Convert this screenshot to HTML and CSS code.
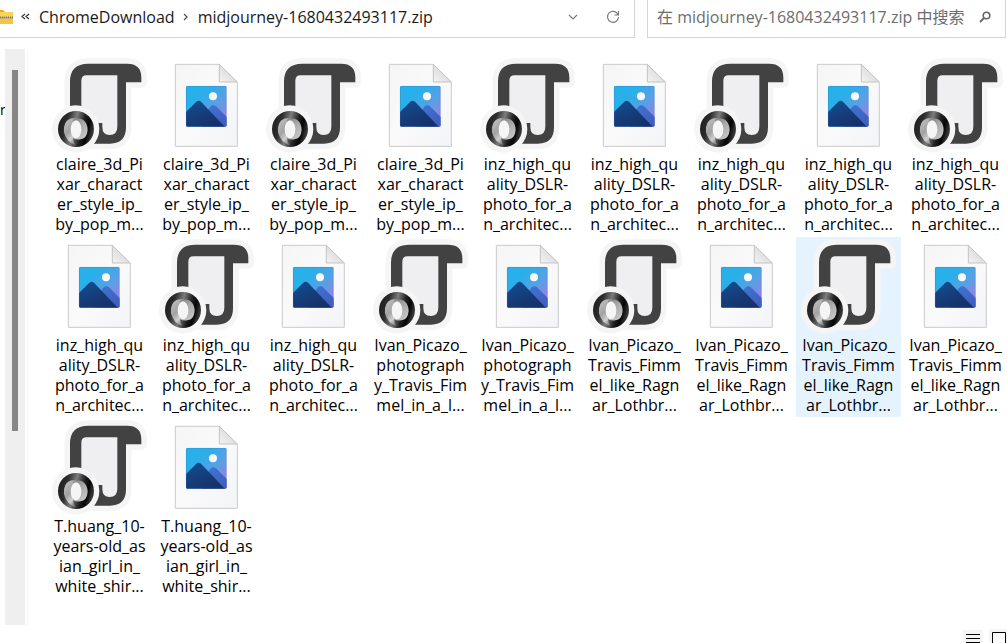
FILE: index.html
```html
<!DOCTYPE html>
<html lang="zh-CN">
<head>
<meta charset="utf-8">
<title>midjourney-1680432493117.zip</title>
<link rel="stylesheet" href="styles.css">
</head>
<body>
<svg class="defs" width="0" height="0" aria-hidden="true">
  <defs>
    <linearGradient id="ring" x1="0" y1="0.2" x2="1" y2="0.45"><stop offset="0" stop-color="#1c1c1c"/><stop offset="0.25" stop-color="#2c2c2c"/><stop offset="0.48" stop-color="#7c7c7c"/><stop offset="0.7" stop-color="#222"/><stop offset="0.85" stop-color="#060606"/><stop offset="1" stop-color="#3a3a3a"/></linearGradient>
    <linearGradient id="swirlA" x1="0" y1="0" x2="0.6" y2="1"><stop offset="0" stop-color="#c4c4c4"/><stop offset="0.5" stop-color="#a2a2a2"/><stop offset="0.75" stop-color="#d0d0d0"/><stop offset="1" stop-color="#777"/></linearGradient>
    <linearGradient id="swirlB" x1="0" y1="0" x2="0.6" y2="1"><stop offset="0" stop-color="#808080"/><stop offset="0.5" stop-color="#ababab"/><stop offset="1" stop-color="#c6c6c6"/></linearGradient>
    <linearGradient id="page" x1="0" y1="0" x2="1" y2="1"><stop offset="0" stop-color="#f5f5f6"/><stop offset="0.5" stop-color="#fafafb"/><stop offset="1" stop-color="#f3f4f7"/></linearGradient>
    <linearGradient id="fold" x1="0" y1="1" x2="0.6" y2="0.4"><stop offset="0" stop-color="#f4f4f4"/><stop offset="1" stop-color="#dcdcdc"/></linearGradient>
    <linearGradient id="sky" x1="0.35" y1="0.2" x2="1" y2="0.85"><stop offset="0" stop-color="#27b0ea"/><stop offset="0.5" stop-color="#5a9fe5"/><stop offset="1" stop-color="#a779dc"/></linearGradient>
    <linearGradient id="hill" x1="0" y1="0" x2="0.6" y2="1"><stop offset="0" stop-color="#124f92"/><stop offset="1" stop-color="#173068"/></linearGradient>
    <linearGradient id="hill2" x1="0" y1="0" x2="1" y2="1"><stop offset="0" stop-color="#3f78d4"/><stop offset="1" stop-color="#4059bd"/></linearGradient>
    <clipPath id="frame"><rect x="102" y="108" width="122" height="122" rx="4"/></clipPath>
    <symbol id="json" viewBox="6 18 315 291">
      <path d="M75 235V95Q75 41 130 41H246Q289 41 289 82V97H243V232Q243 281 195 281H110Z" fill="#f5f5f5" stroke="#f5f5f5" stroke-width="33" stroke-linejoin="round"/>
      <path d="M75 235V95Q75 41 130 41H246Q289 41 289 82V97H243V232Q243 281 195 281H110Z" fill="#424242"/>
      <path d="M109 235V92Q109 76 125 76H217V230Q217 255 194 255Q172 255 172 232V219H155Z" fill="#efeff1"/>
      <circle cx="92" cy="237" r="71" fill="#f5f5f5"/>
      <circle cx="93" cy="237" r="54" fill="url(#ring)"/>
      <path d="M106 211Q76 196 61 219Q48 246 70 272Q78 280 92 286Q84 276 84 264Z" fill="url(#swirlA)"/>
      <path d="M84 209Q100 202 114 209Q128 220 128 240Q126 266 106 268Q94 270 84 265Z" fill="url(#swirlB)"/>
      <ellipse cx="93" cy="238" rx="16" ry="27" fill="#f5f5f5"/>
    </symbol>
    <symbol id="image" viewBox="6 18 315 291">
      <path d="M70 43H202L256 97V289H70Z" fill="url(#page)" stroke="#cbcbcb" stroke-width="3"/>
      <path d="M202 43V96H256Z" fill="url(#fold)" stroke="#c3c3c3" stroke-width="3" stroke-linejoin="round"/>
      <g clip-path="url(#frame)">
        <path d="M102 108H224V230H102Z" fill="url(#sky)"/>
        <path d="M150 204L176 169Q184 162 192 169L226 203V232H150Z" fill="url(#hill2)"/>
        <path d="M100 188L133 155Q140 149 147 155L220 232H100Z" fill="url(#hill)"/>
        <circle cx="183" cy="139" r="12" fill="#f7f9fb"/>
      </g>
      <rect x="103" y="109" width="120" height="120" rx="4" fill="none" stroke="#3978bd" stroke-opacity="0.45" stroke-width="2"/>
    </symbol>
  </defs>
</svg>

<header class="toolbar">
  <nav class="address" aria-label="地址">
    <svg class="zip" width="14" height="16" viewBox="0 0 14 16" aria-hidden="true">
      <path d="M0 1H3L5 3H13V13H0Z" fill="#e8a82c"/>
      <path d="M0 3H13V8H0Z" fill="#fcd354"/>
      <path d="M0 10H13V15H0Z" fill="#f5c542"/>
      <path d="M0 8.5H13" stroke="#7b7461" stroke-width="2" stroke-dasharray="1 1"/>
      <path d="M0 10H13" stroke="#c9c5b5"/>
    </svg>
    <button class="more" type="button" aria-label="更多"><svg width="9" height="8" viewBox="0 0 9 8"><path d="M4 1L1 3.5L4 6M8 1L5 3.5L8 6" fill="none" stroke="#333" stroke-width="1.2"/></svg></button>
    <button class="crumb" type="button">ChromeDownload</button>
    <svg class="sep" width="6" height="8" viewBox="0 0 6 8" aria-hidden="true"><path d="M1 1L4 4L1 7" fill="none" stroke="#555" stroke-width="1.3"/></svg>
    <button class="crumb current" type="button">midjourney-1680432493117.zip</button>
    <button class="tool" type="button" aria-label="展开"><svg width="10" height="6" viewBox="0 0 10 6"><path d="M1 1L5 5L9 1" fill="none" stroke="#777" stroke-width="1.1"/></svg></button>
    <button class="tool" type="button" aria-label="刷新"><svg width="14" height="14" viewBox="0 0 14 14"><path d="M12 4.5A5.5 5.5 0 1 0 12.5 7M12.5 1V5H8.5" fill="none" stroke="#777" stroke-width="1.1"/></svg></button>
  </nav>
  <form class="search">
    <input type="search" aria-label="搜索" placeholder="在 midjourney-1680432493117.zip 中搜索">
    <button class="find" type="button" aria-label="搜索"><svg width="12" height="12" viewBox="0 0 12 12"><circle cx="7.5" cy="4.5" r="3.3" fill="none" stroke="#666" stroke-width="1.6"/><path d="M5 7L1 11" stroke="#666" stroke-width="1.8"/></svg></button>
  </form>
</header>

<main class="workspace">
  <aside class="tree"><span class="label">r</span><div class="track"><div class="thumb"></div></div></aside>
  <section class="files">
    <button class="tile" type="button"><svg><use href="#json"/></svg><span>claire_3d_Pi<br>xar_charact<br>er_style_ip_<br>by_pop_m...</span></button>
    <button class="tile" type="button"><svg><use href="#image"/></svg><span>claire_3d_Pi<br>xar_charact<br>er_style_ip_<br>by_pop_m...</span></button>
    <button class="tile" type="button"><svg><use href="#json"/></svg><span>claire_3d_Pi<br>xar_charact<br>er_style_ip_<br>by_pop_m...</span></button>
    <button class="tile" type="button"><svg><use href="#image"/></svg><span>claire_3d_Pi<br>xar_charact<br>er_style_ip_<br>by_pop_m...</span></button>
    <button class="tile" type="button"><svg><use href="#json"/></svg><span>inz_high_qu<br>ality_DSLR-<br>photo_for_a<br>n_architec...</span></button>
    <button class="tile" type="button"><svg><use href="#image"/></svg><span>inz_high_qu<br>ality_DSLR-<br>photo_for_a<br>n_architec...</span></button>
    <button class="tile" type="button"><svg><use href="#json"/></svg><span>inz_high_qu<br>ality_DSLR-<br>photo_for_a<br>n_architec...</span></button>
    <button class="tile" type="button"><svg><use href="#image"/></svg><span>inz_high_qu<br>ality_DSLR-<br>photo_for_a<br>n_architec...</span></button>
    <button class="tile" type="button"><svg><use href="#json"/></svg><span>inz_high_qu<br>ality_DSLR-<br>photo_for_a<br>n_architec...</span></button>
    <button class="tile" type="button"><svg><use href="#image"/></svg><span>inz_high_qu<br>ality_DSLR-<br>photo_for_a<br>n_architec...</span></button>
    <button class="tile" type="button"><svg><use href="#json"/></svg><span>inz_high_qu<br>ality_DSLR-<br>photo_for_a<br>n_architec...</span></button>
    <button class="tile" type="button"><svg><use href="#image"/></svg><span>inz_high_qu<br>ality_DSLR-<br>photo_for_a<br>n_architec...</span></button>
    <button class="tile" type="button"><svg><use href="#json"/></svg><span>Ivan_Picazo_<br>photograph<br>y_Travis_Fim<br>mel_in_a_l...</span></button>
    <button class="tile" type="button"><svg><use href="#image"/></svg><span>Ivan_Picazo_<br>photograph<br>y_Travis_Fim<br>mel_in_a_l...</span></button>
    <button class="tile" type="button"><svg><use href="#json"/></svg><span>Ivan_Picazo_<br>Travis_Fimm<br>el_like_Ragn<br>ar_Lothbr...</span></button>
    <button class="tile" type="button"><svg><use href="#image"/></svg><span>Ivan_Picazo_<br>Travis_Fimm<br>el_like_Ragn<br>ar_Lothbr...</span></button>
    <button class="tile hovered" type="button"><svg><use href="#json"/></svg><span>Ivan_Picazo_<br>Travis_Fimm<br>el_like_Ragn<br>ar_Lothbr...</span></button>
    <button class="tile" type="button"><svg><use href="#image"/></svg><span>Ivan_Picazo_<br>Travis_Fimm<br>el_like_Ragn<br>ar_Lothbr...</span></button>
    <button class="tile" type="button"><svg><use href="#json"/></svg><span>T.huang_10-<br>years-old_as<br>ian_girl_in_<br>white_shir...</span></button>
    <button class="tile" type="button"><svg><use href="#image"/></svg><span>T.huang_10-<br>years-old_as<br>ian_girl_in_<br>white_shir...</span></button>
  </section>
</main>

<footer class="status">
  <button class="view" type="button" aria-label="详细信息"><svg width="20" height="13" viewBox="0 0 20 13"><path d="M3 4.5H17M3 8.5H17M3 12.5H17" stroke="#000"/></svg></button>
  <button class="view large" type="button" aria-label="大图标"><svg width="18" height="14" viewBox="0 0 18 14"><path d="M3.500 16V3.500H16.500V16" fill="#fff" stroke="#000"/></svg></button>
</footer>
</body>
</html>
```
FILE: styles.css
```css
* {
  box-sizing: border-box;
}

body {
  display: flex;
  flex-direction: column;
  height: 100vh;
  margin: 0;
  overflow: hidden;
  background: #fff;
  color: #000;
  font: 16px/20px "Open Sans", "Noto Sans CJK SC", sans-serif;
}

button,
input {
  padding: 0;
  border: 0;
  background: none;
  color: inherit;
  font: inherit;
}

svg {
  display: block;
  flex: none;
}

.defs {
  position: absolute;
}

.toolbar {
  display: grid;
  grid-template-columns: minmax(0, 635fr) minmax(0, 359fr);
  gap: 12px;
  height: 38px;
  padding-right: 1px;
}

.address,
.search {
  display: flex;
  align-items: center;
  padding-bottom: 4px;
  border: 1px solid #d5d5d5;
  border-top: 0;
}

.address {
  border-left: 0;
  padding-right: 14px;
}

.more {
  margin: 0 9px 0 7px;
}

.crumb {
  color: #1a1a1a;
}

.sep {
  margin: 0 9px 0 8px;
}

.current {
  margin-right: auto;
}

.tool {
  margin-left: 28px;
}

.search {
  padding-right: 14px;
  padding-left: 9px;
}

.search input {
  flex: 1;
  min-width: 0;
  outline: 0;
}

.search input::placeholder {
  color: #6d6d6d;
}

.workspace {
  display: flex;
  flex: 1;
  min-height: 0;
  padding-top: 11px;
}

.tree {
  display: flex;
  width: 28px;
  border-right: 1px solid #f5f5f5;
}

.label {
  flex: none;
  width: 5px;
  padding-top: 51px;
  font-size: 14px;
}

.track {
  width: 20px;
  padding: 21px 7px 0;
  background: #efefef;
}

.thumb {
  height: 65%;
  max-height: 362px;
  background: #868686;
}

.files {
  display: grid;
  flex: 1;
  grid-template-columns: repeat(auto-fill, 105px);
  align-content: start;
  gap: 1px 2px;
  margin-right: -1px;
  padding: 7px 0 0 19px;
}

.tile {
  display: flex;
  flex-direction: column;
  align-items: center;
  gap: 1px;
  padding-bottom: 2px;
  white-space: nowrap;
}

.tile svg {
  width: 105px;
  height: 97px;
}

.hovered {
  background: #e5f3ff;
}

.status {
  display: flex;
  justify-content: flex-end;
  align-items: flex-end;
  gap: 6px;
  height: 18px;
}

.view {
  background: #f5f5f5;
}
```
